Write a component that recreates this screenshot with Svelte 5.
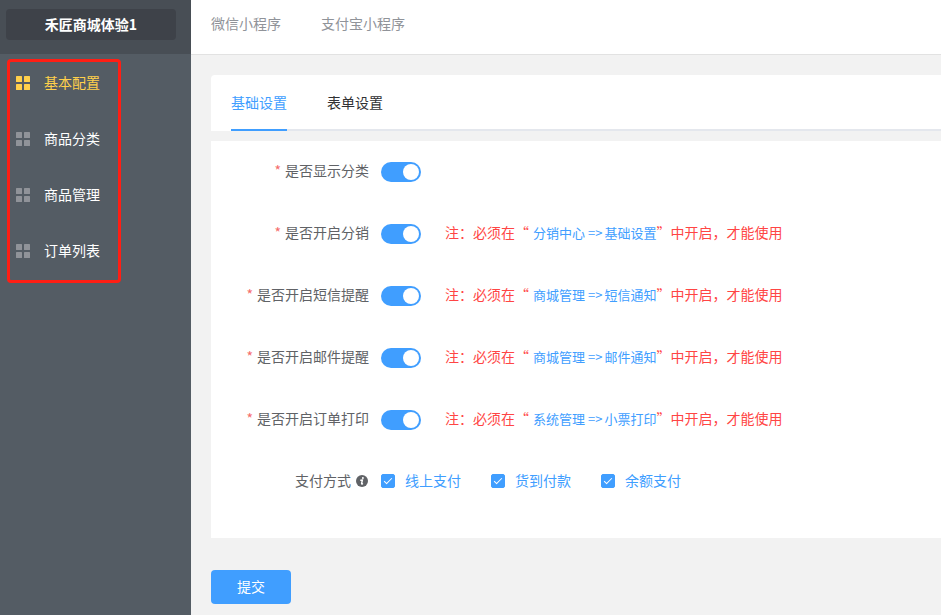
<script>
  const menu = ['基本配置', '商品分类', '商品管理', '订单列表'];
  const platforms = ['微信小程序', '支付宝小程序'];
  const tabs = ['基础设置', '表单设置'];

  let activeMenu = $state(0);
  let activeTab = $state(0);
  let switches = $state([
    { id: 'category', label: '是否显示分类', on: true },
    { id: 'share', label: '是否开启分销', on: true, from: '分销中心', to: '基础设置' },
    { id: 'sms', label: '是否开启短信提醒', on: true, from: '商城管理', to: '短信通知' },
    { id: 'mail', label: '是否开启邮件提醒', on: true, from: '商城管理', to: '邮件通知' },
    { id: 'print', label: '是否开启订单打印', on: true, from: '系统管理', to: '小票打印' }
  ]);
  let payments = $state([
    { label: '线上支付', on: true },
    { label: '货到付款', on: true },
    { label: '余额支付', on: true }
  ]);
</script>

<div class="app">
  <aside>
    <div class="brand"><button type="button">禾匠商城体验1</button></div>
    <nav class="menu">
      {#each menu as item, i}
        <a href="#menu-{i}" class:active={activeMenu === i} onclick={() => (activeMenu = i)}>
          <svg width="14" height="14" viewBox="0 0 14 14" fill="currentColor" aria-hidden="true">
            <rect width="6" height="6" rx="0.5" />
            <rect x="8" width="6" height="6" rx="0.5" />
            <rect y="8" width="6" height="6" rx="0.5" />
            <rect x="8" y="8" width="6" height="6" rx="0.5" />
          </svg>
          <span>{item}</span>
        </a>
      {/each}
    </nav>
  </aside>

  <main>
    <header>
      {#each platforms as platform, i}
        <a href="#platform-{i}">{platform}</a>
      {/each}
    </header>

    <form onsubmit={(event) => event.preventDefault()}>
      <div class="tabs-card">
        <div class="tabs" role="tablist">
          {#each tabs as tab, i}
            <button
              type="button"
              role="tab"
              aria-selected={activeTab === i}
              class:selected={activeTab === i}
              onclick={() => (activeTab = i)}>{tab}</button>
          {/each}
        </div>
      </div>

      <div class="panel">
        {#each switches as row}
          <div class="row">
            <label class="name" for={row.id}><span class="star">*</span>{row.label}</label>
            <input class="switch" type="checkbox" role="switch" id={row.id} bind:checked={row.on} />
            {#if row.from}
              <p class="note">注：必须在“<a href="#{row.id}">{row.from}<span class="arrow">=&gt;</span>{row.to}</a>”中开启，才能使用</p>
            {/if}
          </div>
        {/each}
        <div class="row">
          <div class="name">
            支付方式
            <svg class="info" width="12" height="12" viewBox="0 0 12 12" aria-hidden="true">
              <circle cx="6" cy="6" r="6" fill="#606266" />
              <circle cx="6.9" cy="2.9" r="1" fill="#fff" />
              <path d="M4.8 5.2 6.4 5 5.6 8.6q0 .7.9.2" fill="none" stroke="#fff" stroke-width="1.4" stroke-linecap="round" />
            </svg>
          </div>
          <div class="checks">
            {#each payments as payment}
              <label class="check"><input type="checkbox" bind:checked={payment.on} /><span>{payment.label}</span></label>
            {/each}
          </div>
        </div>
      </div>

      <button class="submit" type="submit">提交</button>
    </form>
  </main>
</div>

<style>
  .app {
    display: flex;
    min-height: 100vh;
    background: #f2f2f2;
    color: #606266;
    font: 14px/20px "Noto Sans CJK SC", sans-serif;
  }
  .app *,
  .app *::after {
    box-sizing: border-box;
  }
  a {
    text-decoration: none;
  }
  button {
    font: inherit;
    border: 0;
    cursor: pointer;
  }
  aside {
    flex: 0 0 191px;
    background: #545c64;
  }
  .brand {
    display: flex;
    height: 54px;
    padding: 9px 15px 14px 6px;
    background: #484e55;
  }
  .brand button {
    flex: 1;
    padding: 0 0 2px;
    border-radius: 4px;
    background: #3e4249;
    color: #fff;
    font-weight: 700;
  }
  .menu {
    position: relative;
    padding-top: 1px;
  }
  .menu::after {
    content: "";
    position: absolute;
    top: 5px;
    left: 7px;
    width: 114px;
    height: 224px;
    border: 3px solid #ff1e14;
    border-radius: 4px;
    pointer-events: none;
  }
  .menu a {
    display: flex;
    align-items: center;
    gap: 14px;
    height: 56px;
    padding-left: 16px;
    color: #fff;
  }
  .menu span,
  .check span {
    padding-bottom: 2px;
  }
  .menu svg {
    color: #909399;
  }
  .menu .active,
  .menu .active svg {
    color: #ffd04b;
  }
  main {
    flex: 1;
    min-width: 0;
  }
  header {
    display: flex;
    align-items: center;
    gap: 40px;
    height: 55px;
    padding: 0 20px 8px;
    background: #fff;
    border-bottom: 1px solid #e2e2e2;
  }
  header a {
    color: #909399;
    white-space: nowrap;
  }
  form {
    padding: 20px 0 11px 20px;
  }
  .tabs-card {
    padding-left: 20px;
    background: #fff;
    border-radius: 4px 0 0 0;
  }
  .tabs {
    display: flex;
    gap: 40px;
    height: 56px;
    box-shadow: inset 0 -2px #e4e7ed;
  }
  .tabs button {
    padding: 0;
    border-bottom: 2px solid transparent;
    background: none;
    color: #303133;
  }
  .tabs .selected {
    color: #409eff;
    border-color: #409eff;
  }
  .panel {
    margin-top: 10px;
    padding-bottom: 27px;
    background: #fff;
  }
  .row {
    display: flex;
    align-items: center;
    height: 62px;
  }
  .row:last-child {
    height: 60px;
  }
  .name {
    display: flex;
    align-items: center;
    justify-content: flex-end;
    flex: 0 0 170px;
    padding: 0 12px 4px 0;
    white-space: nowrap;
  }
  .row:last-child .name {
    padding: 0 13px 2px 0;
  }
  .star {
    margin-right: 4px;
    color: #f56c6c;
  }
  .info {
    margin: 2px 0 0 5px;
  }
  .switch {
    position: relative;
    appearance: none;
    flex: 0 0 40px;
    height: 20px;
    margin: 0;
    border-radius: 10px;
    background: #dcdfe6;
    cursor: pointer;
  }
  .switch::after {
    content: "";
    position: absolute;
    top: 2px;
    left: 2px;
    width: 16px;
    height: 16px;
    border-radius: 50%;
    background: #fff;
  }
  .switch:checked {
    background: #409eff;
  }
  .switch:checked::after {
    left: 22px;
  }
  .note {
    margin: 0 0 0 24px;
    padding-bottom: 4px;
    color: #ff4544;
    white-space: nowrap;
  }
  .note a {
    margin-left: 4px;
    color: #409eff;
    font-size: 13px;
  }
  .arrow {
    margin: 0 2px 0 3px;
  }
  .checks {
    display: flex;
    gap: 30px;
  }
  .check {
    display: flex;
    align-items: center;
    gap: 10px;
    color: #409eff;
    white-space: nowrap;
  }
  .check input {
    position: relative;
    appearance: none;
    width: 14px;
    height: 14px;
    margin: 0;
    border: 1px solid #dcdfe6;
    border-radius: 2px;
    background: #fff;
  }
  .check input:checked {
    border-color: #409eff;
    background: #409eff;
  }
  .check input:checked::after {
    content: "";
    position: absolute;
    top: 1px;
    left: 4px;
    width: 4px;
    height: 8px;
    border: solid #fff;
    border-width: 0 1px 1px 0;
    transform: rotate(45deg);
  }
  .submit {
    display: block;
    width: 80px;
    height: 34px;
    margin-top: 32px;
    padding: 0 0 2px;
    border-radius: 4px;
    background: #409eff;
    color: #fff;
  }
</style>
